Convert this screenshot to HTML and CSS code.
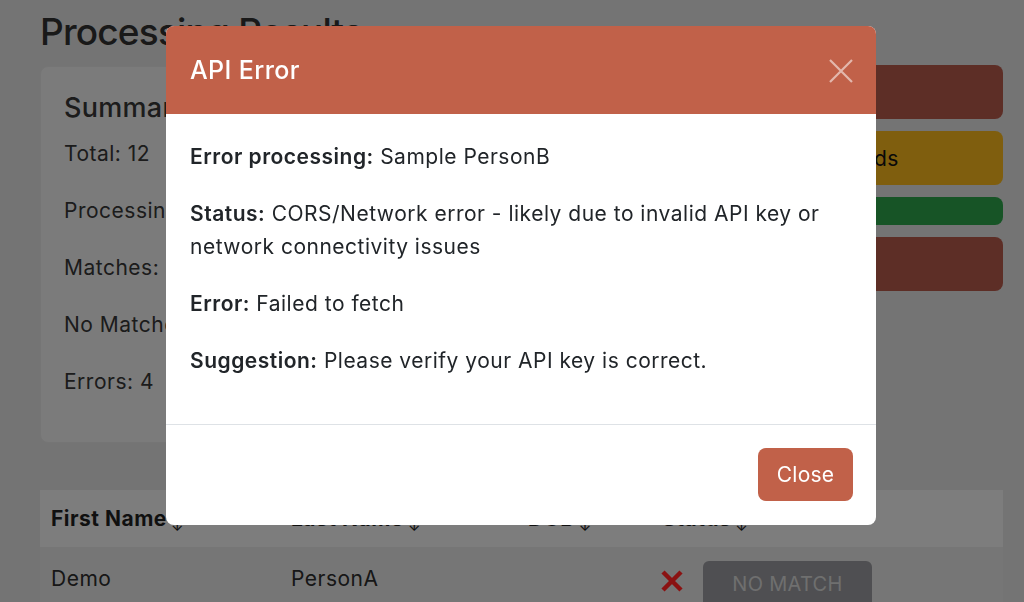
FILE: index.html
```html
<!DOCTYPE html>
<html lang="en">
<head>
<meta charset="utf-8">
<title>Processing Results</title>
<link rel="stylesheet" href="styles.css">
</head>
<body>
<main class="page">
  <h1 class="page-title">Processing Results</h1>
  <div class="top-grid">
    <section class="summary-card">
      <h2 class="summary-title">Summary</h2>
      <p class="stat">Total: 12</p>
      <p class="stat">Processing: 0</p>
      <p class="stat">Matches: 4</p>
      <p class="stat">No Matches: 4</p>
      <p class="stat">Errors: 4</p>
    </section>
    <section class="alerts">
      <div class="alert alert-danger">Errors occurred</div>
      <div class="alert alert-warning">Processing complete: 12 records</div>
      <div class="progress-bar"></div>
      <div class="alert alert-danger">4 errors</div>
    </section>
  </div>
  <table class="results">
    <colgroup>
      <col class="c1"><col class="c2"><col class="c3"><col class="c4">
    </colgroup>
    <thead>
      <tr>
        <th>First Name<span class="sort">↓</span></th>
        <th>Last Name<span class="sort">↓</span></th>
        <th>DOB<span class="sort">↓</span></th>
        <th>Status<span class="sort">↓</span></th>
      </tr>
    </thead>
    <tbody>
      <tr>
        <td>Demo</td>
        <td>PersonA</td>
        <td></td>
        <td>
          <div class="status-cell">
            <svg class="x-icon" viewBox="0 0 24 24" width="24" height="24" aria-hidden="true"><path d="M3 3 L21 21 M21 3 L3 21" stroke="currentColor" stroke-width="4.5"/></svg>
            <span class="badge-btn">NO MATCH</span>
          </div>
        </td>
      </tr>
    </tbody>
  </table>
</main>

<div class="backdrop"></div>
<div class="modal" role="dialog" aria-labelledby="modal-title">
  <div class="modal-header">
    <h3 id="modal-title" class="modal-title">API Error</h3>
    <button class="modal-close" aria-label="Close">
      <svg viewBox="0 0 24 24" width="24" height="24" aria-hidden="true"><path d="M1 1 L23 23 M23 1 L1 23" stroke="currentColor" stroke-width="2.2"/></svg>
    </button>
  </div>
  <div class="modal-body">
    <p><strong>Error processing:</strong> Sample PersonB</p>
    <p><strong>Status:</strong> CORS/Network error - likely due to invalid API key or network connectivity issues</p>
    <p><strong>Error:</strong> Failed to fetch</p>
    <p><strong>Suggestion:</strong> Please verify your API key is correct.</p>
  </div>
  <div class="modal-footer">
    <button class="btn-close">Close</button>
  </div>
</div>
</body>
</html>
```
FILE: styles.css
```css
* { box-sizing: border-box; }

html, body {
  margin: 0;
  height: 100%;
  overflow: hidden;
}

body {
  background: #d3d3d3;
  font-family: Inter, "Liberation Sans", Arial, sans-serif;
  color: #333;
  letter-spacing: 0.5px;
}

.page {
  padding: 0 21px 0 40px;
}

.page-title {
  margin: 0;
  padding-top: 8px;
  font-size: 37px;
  font-weight: 500;
  line-height: 48px;
  height: 66px;
  color: #2e2e2e;
  letter-spacing: -0.8px;
}

.top-grid {
  display: grid;
  grid-template-columns: 480px 1fr;
  gap: 24px;
  align-items: start;
}

.summary-card {
  background: #e0e0e0;
  border: 1px solid #d6d6d6;
  border-radius: 8px;
  padding: 24px 23px 22px;
  height: 377px;
}

.summary-title {
  margin: 0 0 12px;
  font-size: 27px;
  font-weight: 500;
  line-height: 34px;
  letter-spacing: 0.3px;
}

.stat {
  margin: 0 0 24px;
  font-size: 21px;
  line-height: 33px;
}

.alerts {
  display: flex;
  flex-direction: column;
  gap: 12px;
  margin-top: -1px;
}

.alert {
  border-radius: 8px;
  height: 54px;
  padding: 0 16px;
  display: flex;
  align-items: center;
  font-size: 21px;
  color: #111;
  white-space: nowrap;
  overflow: hidden;
}

.alert-danger { background: #aa5446; color: #aa5446; }
.alert-warning { background: #e7ab1b; }

.progress-bar {
  height: 28px;
  border-radius: 8px;
  background: #2a9945;
}

.results {
  margin-top: 47px;
  width: 100%;
  border-collapse: collapse;
  font-size: 21px;
  table-layout: fixed;
}

.c1 { width: 240px; }
.c2 { width: 237px; }
.c3 { width: 134px; }

.results th {
  background: #e3e3e3;
  text-align: left;
  font-weight: 700;
  height: 57px;
  padding: 0 11px;
  color: #1e1e1e;
}

.sort {
  font-size: 15px;
  font-weight: 400;
  position: relative;
  top: 5px;
  margin-left: 4px;
}

.results td {
  background: #d8d8d8;
  height: 64px;
  padding: 0 11px 2px;
  color: #2a2a2a;
}

.status-cell {
  display: flex;
  align-items: center;
  gap: 19px;
  padding-top: 12px;
}

.x-icon {
  color: #fb2121;
  margin-left: -2px;
  position: relative;
  top: -3px;
}

.badge-btn {
  display: inline-flex;
  align-items: center;
  justify-content: center;
  width: 169px;
  height: 46px;
  background: #909195;
  color: #cacaca;
  border-radius: 6px;
  font-size: 20px;
  letter-spacing: 0.3px;
}

.backdrop {
  position: fixed;
  inset: 0;
  background: rgba(0, 0, 0, 0.45);
}

.modal {
  position: fixed;
  top: 26px;
  left: 166px;
  width: 710px;
  background: #fff;
  border-radius: 8px;
  overflow: hidden;
  color: #212529;
}

.modal-header {
  background: #c16149;
  display: flex;
  align-items: center;
  justify-content: space-between;
  padding: 24px 23px 24px 24px;
}

.modal-title {
  margin: 0;
  font-size: 25px;
  font-weight: 500;
  line-height: 40px;
  color: #fff;
  letter-spacing: 0.4px;
}

.modal-close {
  background: none;
  border: 0;
  padding: 0;
  width: 24px;
  height: 24px;
  color: rgba(255, 255, 255, 0.55);
  display: flex;
  position: relative;
  top: 1px;
}

.modal-body {
  padding: 26px 24px 23px;
  font-size: 21px;
  line-height: 33px;
}

.modal-body p {
  margin: 0 0 24px;
}

.modal-body strong {
  font-weight: 600;
}

.modal-footer {
  border-top: 1px solid #dee2e6;
  padding: 23px 23px 24px;
  display: flex;
  justify-content: flex-end;
}

.btn-close {
  background: #c16149;
  color: #fff;
  border: 0;
  border-radius: 8px;
  font-family: inherit;
  font-size: 21px;
  letter-spacing: 0.2px;
  height: 53px;
  width: 95px;
}
```
